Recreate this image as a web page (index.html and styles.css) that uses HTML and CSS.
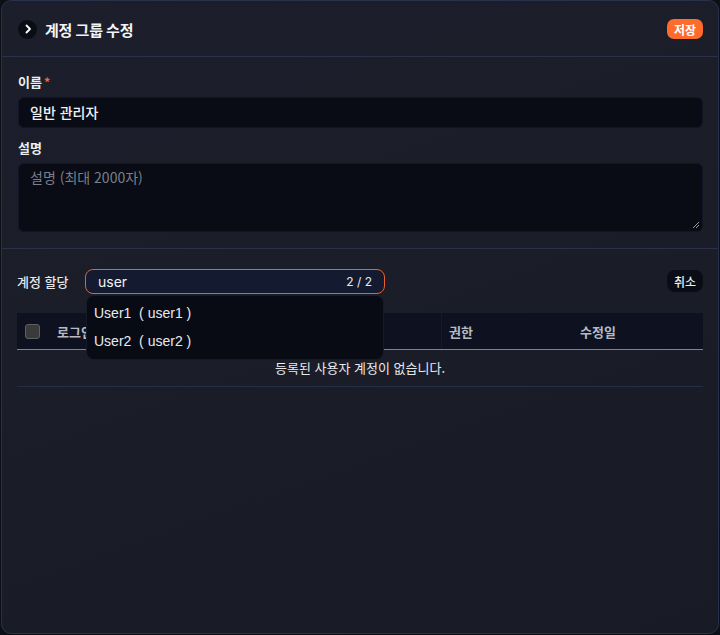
FILE: index.html
```html
<!DOCTYPE html>
<html lang="ko">
<head>
<meta charset="utf-8">
<link rel="stylesheet" href="styles.css">
</head>
<body>
<div class="card">
  <header class="head">
    <div class="title">
      <span class="chev"><svg width="18" height="18" viewBox="0 0 18 18"><path d="M7.5 5.5 L11 9 L7.5 12.5" fill="none" stroke="#fff" stroke-width="1.8" stroke-linecap="round" stroke-linejoin="round"/></svg></span>
      <h1>계정 그룹 수정</h1>
    </div>
    <button class="save">저장</button>
  </header>

  <section class="form">
    <label class="lbl">이름<span class="req">*</span></label>
    <div class="input">일반 관리자</div>
    <label class="lbl">설명</label>
    <div class="textarea"><span class="ph">설명 (최대 2000자)</span>
      <svg class="grip" width="8" height="8" viewBox="0 0 8 8"><path d="M1 7 L7 1 M4 7 L7 4" stroke="#9a9a9a" stroke-width="1"/></svg>
    </div>
  </section>

  <section class="assign">
    <div class="bar">
      <span class="alabel">계정 할당</span>
      <div class="searchwrap">
        <div class="search"><span>user</span><span class="count">2 / 2</span></div>
        <ul class="menu">
          <li>User1&nbsp;&nbsp;( user1 )</li>
          <li>User2&nbsp;&nbsp;( user2 )</li>
        </ul>
      </div>
      <button class="cancel">취소</button>
    </div>
    <div class="table">
      <div class="thead">
        <span class="cb"></span>
        <span class="c-login">로그인</span>
        <span class="c-role">권한</span>
        <span class="c-date">수정일</span>
      </div>
      <div class="empty">등록된 사용자 계정이 없습니다.</div>
    </div>
  </section>
</div>
</body>
</html>
```

FILE: styles.css
```css
* { box-sizing: border-box; }
html, body { margin: 0; padding: 0; background: #0d0f16; }
body {
  width: 720px; height: 635px;
  font-family: "Inter", "Noto Sans CJK KR", sans-serif;
  color: #e9ebf0;
}
.card {
  margin: 0 1px;
  height: 634px;
  border: 1px solid #29304a;
  border-radius: 10px;
  background: linear-gradient(160deg, #1c1f2b 0%, #1b1e29 40%, #181b25 100%);
  overflow: hidden;
}
.head {
  height: 56px;
  display: flex; align-items: center; justify-content: space-between;
  padding: 0 15px 0 16px;
  border-bottom: 1px solid #2a3046;
}
.title { display: flex; align-items: center; gap: 8px; padding-top: 1px; }
.chev {
  width: 19px; height: 19px; border-radius: 50%;
  background: #0a0d15;
  display: flex; align-items: center; justify-content: center;
}
h1 { margin: 0; font-size: 15px; font-weight: 700; color: #f2f3f6; letter-spacing: -0.2px; }
.save {
  border: 0; background: #ff6b2b; color: #fff;
  font: 700 12px "Noto Sans CJK KR", sans-serif;
  height: 20px; padding: 0 7px; border-radius: 7px; margin-top: 1px;
}
.form { padding: 16px 15px 16px 16px; border-bottom: 1px solid #2a3046; }
.lbl { display: block; font: 700 13px "Noto Sans CJK KR", sans-serif; color: #eceef2; height: 18px; line-height: 18px; margin-bottom: 6px; }
.req { color: #ff6b2b; margin-left: 2px; font-size: 12px; }
.input {
  height: 31px; background: #090c15; border: 1px solid #111526;
  border-radius: 6px; padding: 0 11px;
  font: 500 14px "Noto Sans CJK KR", sans-serif; line-height: 29px; color: #f0f1f4;
  margin-bottom: 11px;
}
.textarea {
  position: relative;
  height: 69px; background: #090c15; border: 1px solid #111526;
  border-radius: 6px; padding: 0 11px;
  font: 400 14px "Noto Sans CJK KR", sans-serif; line-height: 27px;
}
.ph { color: #7b7f8a; }
.grip { position: absolute; right: 2px; bottom: 2px; }
.assign { padding: 20px 15px 0 15px; }
.bar { display: flex; align-items: flex-start; height: 25px; }
.alabel { font: 500 13px "Noto Sans CJK KR", sans-serif; color: #e4e6ea; width: 68px; line-height: 24px; padding-top: 1px; }
.searchwrap { position: relative; width: 300px; }
.search {
  height: 25px; border: 1px solid #e8612a; border-radius: 8px;
  background: #141a2f;
  display: flex; align-items: center; justify-content: space-between;
  padding: 0 12px 0 12px;
  font: 400 14px "Inter", sans-serif; color: #f2f3f6;
}
.count { font-size: 12px; color: #e8e9ee; }
.menu {
  position: absolute; z-index: 2; left: 1px; right: 1px; top: 26px;
  margin: 0; padding: 3px 0 4px; list-style: none;
  background: #080b14; border: 1px solid #161b2a; border-radius: 8px;
}
.menu li {
  font: 400 14px "Liberation Sans", "Inter", sans-serif; color: #e8eaee;
  height: 28px; line-height: 28px; padding: 0 7px;
}
.cancel {
  margin-left: auto; margin-top: 1px;
  border: 0; background: #0a0d16; color: #eceef2;
  font: 500 12px "Noto Sans CJK KR", sans-serif;
  height: 22px; padding: 0 7px; border-radius: 8px;
}
.table { margin-top: 19px; }
.thead {
  height: 37px; background: #0e1220;
  border-bottom: 1px solid #e8612a;
  display: flex; align-items: center;
  font: 700 13px "Noto Sans CJK KR", sans-serif; color: #b7bac3;
  position: relative;
}
.cb {
  width: 15px; height: 15px; margin-left: 8px;
  background: #3a3a3b; border: 1px solid #5e5f63; border-radius: 3px;
}
.c-login { margin-left: 17px; width: 199px; }
.c-role { position: absolute; left: 432px; }
.c-date { position: absolute; left: 563px; }
.thead::after { content: ""; position: absolute; left: 424px; top: 0; bottom: 0; width: 1px; background: #151a2a; }
.empty {
  font: 400 13px "Noto Sans CJK KR", sans-serif; color: #e8e9ed;
  height: 37px; line-height: 36px; text-align: center;
  border-bottom: 1px solid #272d48;
}
```
